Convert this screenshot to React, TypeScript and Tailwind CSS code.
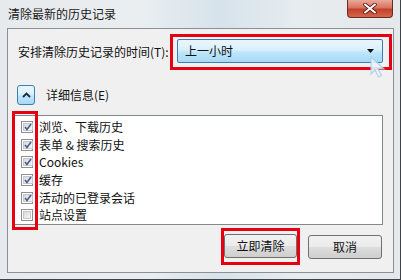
import React from 'react';

const items = [
  { label: '浏览、下载历史', checked: true },
  { label: '表单 & 搜索历史', checked: true },
  { label: 'Cookies', checked: true },
  { label: '缓存', checked: true },
  { label: '活动的已登录会话', checked: true },
  { label: '站点设置', checked: false },
];

function CheckBox({ checked }: { checked: boolean }) {
  return (
    <span className="w-[12px] h-[12px] border border-[#8f8f8f] bg-white p-[1px] flex shrink-0">
      <span className="flex-1 flex items-center justify-center bg-gradient-to-br from-[#d6d9dd] to-[#f6f7f8] border border-[#c4c7cb]">
        {checked && (
          <svg width="8" height="8" viewBox="0 0 8 8">
            <path d="M1 4 L3 6.5 L7 1" fill="none" stroke="#4b5d8e" strokeWidth="1.6" />
          </svg>
        )}
      </span>
    </span>
  );
}

export default function App() {
  return (
    <div className="w-[401px] h-[280px] relative overflow-hidden border-r border-b border-[#3f4347] bg-[linear-gradient(90deg,#e6eaed_0%,#eaeef1_35%,#d6e3ec_55%,#e7ecef_75%,#e4e8eb_100%)] font-['Noto_Sans_CJK_SC','Microsoft_YaHei',sans-serif] text-[12px] text-[#111]">
      {/* title bar */}
      <div className="h-[28px] flex items-start">
        <div className="pl-[8px] pt-[6px] leading-[16px] text-[#1a1a1a]">清除最新的历史记录</div>
        <div className="ml-auto mr-[7px] w-[46px] h-[18px] rounded-b-[4px] border border-t-0 border-[#6e2a1f] bg-[linear-gradient(180deg,#e9a99b_0%,#d9735f_45%,#c2412a_55%,#d3664c_100%)] flex items-center justify-center">
          <svg width="14" height="11" viewBox="0 0 14 11">
            <path d="M2 1.5 L12 9.5 M12 1.5 L2 9.5" stroke="#5a1d14" strokeWidth="3.6" strokeLinecap="round" />
            <path d="M2 1.5 L12 9.5 M12 1.5 L2 9.5" stroke="#ffffff" strokeWidth="2" strokeLinecap="round" />
          </svg>
        </div>
      </div>

      {/* client area */}
      <div className="ml-[7px] mr-[6px] h-[245px] border border-[#8b9097] bg-[#f0f0f0] flex flex-col relative">
        <div className="mt-[5px] h-[36px] flex items-center">
          <span className="ml-[10px] leading-[16px]">安排清除历史记录的时间(T):</span>
          <div className="ml-auto mr-[1px] w-[222px] h-[36px] border-[3px] border-[#e50012] pl-[4px] pr-[6px] pt-[2px]">
            <div className="h-[24px] rounded-[2px] border border-[#3c7fb1] bg-[linear-gradient(180deg,#eaf6fd_0%,#d9f0fc_45%,#bee6fd_55%,#a7d9f5_100%)] flex items-center pl-[7px] pr-[8px]">
              <span className="leading-[16px]">上一小时</span>
              <svg className="ml-auto" width="7" height="4" viewBox="0 0 7 4">
                <path d="M0 0 L7 0 L3.5 4 Z" fill="#111" />
              </svg>
            </div>
          </div>
        </div>

        <div className="mt-[15px] flex items-center">
          <div className="ml-[9px] w-[18px] h-[20px] rounded-[3px] border border-[#3c7fb1] bg-[linear-gradient(180deg,#eaf6fd_0%,#d9f0fc_45%,#bee6fd_55%,#a7d9f5_100%)] flex items-center justify-center">
            <svg width="9" height="6" viewBox="0 0 9 6">
              <path d="M1 5 L4.5 1.5 L8 5" fill="none" stroke="#1c2a3a" strokeWidth="1.8" />
            </svg>
          </div>
          <span className="ml-[11px] leading-[16px]">详细信息(E)</span>
        </div>

        <div className="mt-[10px] ml-[4px] w-[371px] h-[110px] border border-[#828790] bg-white pt-[2px]">
          {items.map((it) => (
            <div key={it.label} className="h-[17.7px] flex items-center pl-[8px]">
              <CheckBox checked={it.checked} />
              <span className="ml-[6px] leading-[16px]">{it.label}</span>
            </div>
          ))}
        </div>

        <div className="mt-[3px] flex items-center justify-end pr-[11px]">
          <div className="w-[79px] h-[37px] border-[3px] border-[#e50012] pt-[3px]">
            <div className="h-[24px] rounded-[3px] border border-[#707070] bg-[linear-gradient(180deg,#f2f2f2_0%,#ebebeb_48%,#dddddd_52%,#cfcfcf_100%)] flex items-center justify-center leading-[16px]">
              立即清除
            </div>
          </div>
          <div className="ml-[8px] w-[74px] h-[24px] rounded-[3px] border border-[#707070] bg-[linear-gradient(180deg,#f2f2f2_0%,#ebebeb_48%,#dddddd_52%,#cfcfcf_100%)] flex items-center justify-center leading-[16px]">
            取消
          </div>
        </div>

        {/* red highlight over checkboxes */}
        <div className="absolute left-[4px] top-[82px] w-[26px] h-[119px] border-[3px] border-[#e50012]" />

        {/* mouse cursor */}
        <svg className="absolute left-[362px] top-[27px]" width="22" height="24" viewBox="0 0 22 24">
          <path d="M1 1 L1 18 L5 14 L8.5 21 L11.5 19.5 L8 13 L14 13 Z" fill="#eaf5fc" stroke="#a9d0ea" strokeWidth="1.2" opacity="0.9" />
        </svg>
      </div>
    </div>
  );
}
